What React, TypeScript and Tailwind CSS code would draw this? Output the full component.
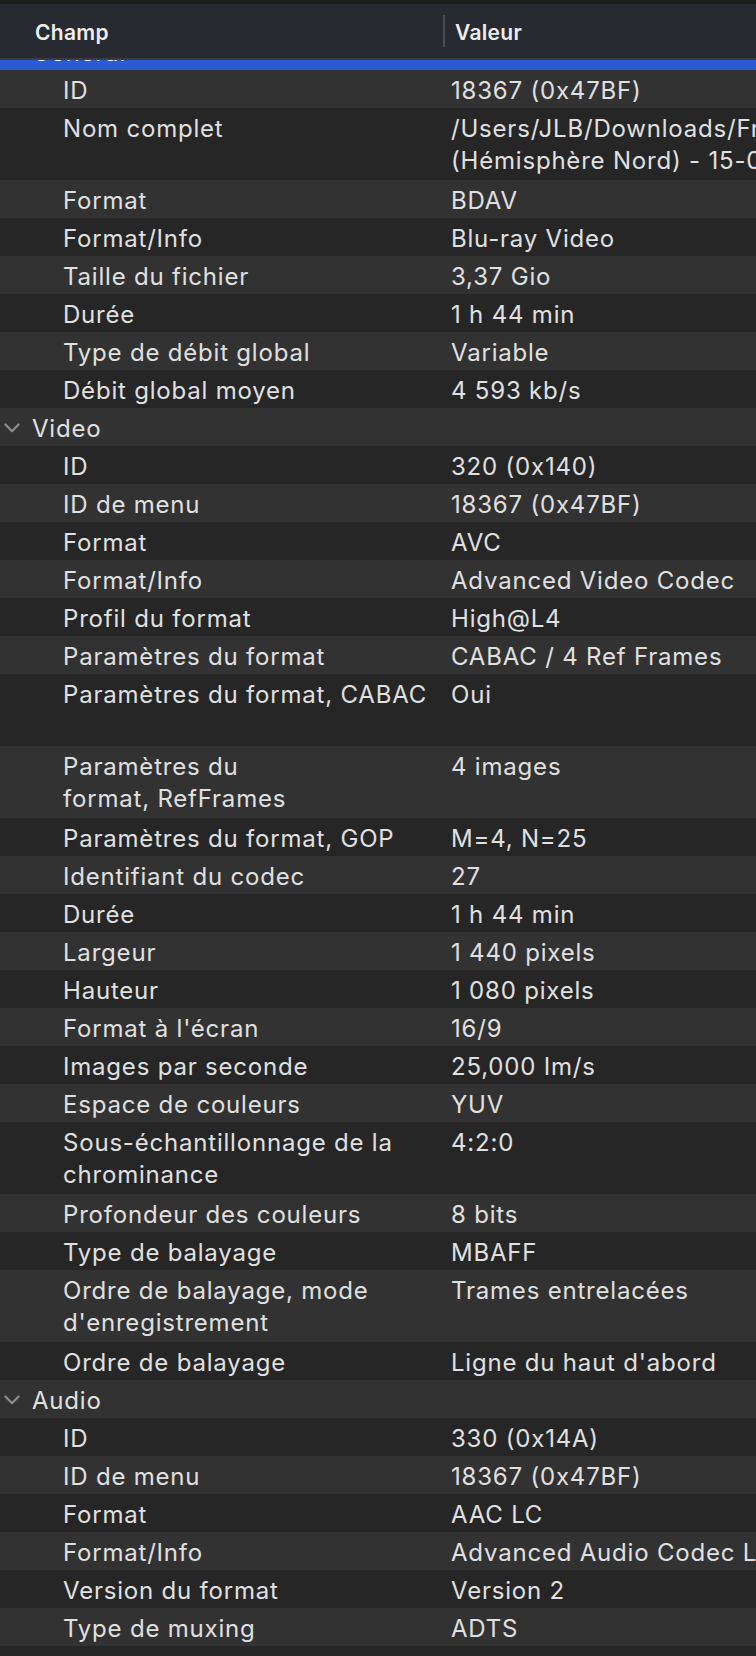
import React from "react";

type Row =
  | { kind: "section"; label: string; selected?: boolean }
  | { kind: "item"; field: string[]; value: string[]; tall?: boolean };

const rows: Row[] = [
  { kind: "section", label: "Général", selected: true },
  { kind: "item", field: ["ID"], value: ["18367 (0x47BF)"] },
  {
    kind: "item",
    field: ["Nom complet"],
    value: ["/Users/JLB/Downloads/France 5 - Les Saisons", "(Hémisphère Nord) - 15-03-2021.m2ts"],
    tall: true,
  },
  { kind: "item", field: ["Format"], value: ["BDAV"] },
  { kind: "item", field: ["Format/Info"], value: ["Blu-ray Video"] },
  { kind: "item", field: ["Taille du fichier"], value: ["3,37 Gio"] },
  { kind: "item", field: ["Durée"], value: ["1 h 44 min"] },
  { kind: "item", field: ["Type de débit global"], value: ["Variable"] },
  { kind: "item", field: ["Débit global moyen"], value: ["4 593 kb/s"] },
  { kind: "section", label: "Video" },
  { kind: "item", field: ["ID"], value: ["320 (0x140)"] },
  { kind: "item", field: ["ID de menu"], value: ["18367 (0x47BF)"] },
  { kind: "item", field: ["Format"], value: ["AVC"] },
  { kind: "item", field: ["Format/Info"], value: ["Advanced Video Codec"] },
  { kind: "item", field: ["Profil du format"], value: ["High@L4"] },
  { kind: "item", field: ["Paramètres du format"], value: ["CABAC / 4 Ref Frames"] },
  { kind: "item", field: ["Paramètres du format, CABAC"], value: ["Oui"], tall: true },
  { kind: "item", field: ["Paramètres du", "format, RefFrames"], value: ["4 images"], tall: true },
  { kind: "item", field: ["Paramètres du format, GOP"], value: ["M=4, N=25"] },
  { kind: "item", field: ["Identifiant du codec"], value: ["27"] },
  { kind: "item", field: ["Durée"], value: ["1 h 44 min"] },
  { kind: "item", field: ["Largeur"], value: ["1 440 pixels"] },
  { kind: "item", field: ["Hauteur"], value: ["1 080 pixels"] },
  { kind: "item", field: ["Format à l'écran"], value: ["16/9"] },
  { kind: "item", field: ["Images par seconde"], value: ["25,000 Im/s"] },
  { kind: "item", field: ["Espace de couleurs"], value: ["YUV"] },
  { kind: "item", field: ["Sous-échantillonnage de la", "chrominance"], value: ["4:2:0"], tall: true },
  { kind: "item", field: ["Profondeur des couleurs"], value: ["8 bits"] },
  { kind: "item", field: ["Type de balayage"], value: ["MBAFF"] },
  {
    kind: "item",
    field: ["Ordre de balayage, mode", "d'enregistrement"],
    value: ["Trames entrelacées"],
    tall: true,
  },
  { kind: "item", field: ["Ordre de balayage"], value: ["Ligne du haut d'abord"] },
  { kind: "section", label: "Audio" },
  { kind: "item", field: ["ID"], value: ["330 (0x14A)"] },
  { kind: "item", field: ["ID de menu"], value: ["18367 (0x47BF)"] },
  { kind: "item", field: ["Format"], value: ["AAC LC"] },
  { kind: "item", field: ["Format/Info"], value: ["Advanced Audio Codec Low Complexity"] },
  { kind: "item", field: ["Version du format"], value: ["Version 2"] },
  { kind: "item", field: ["Type de muxing"], value: ["ADTS"] },
  { kind: "item", field: ["Identifiant du codec"], value: ["40"] },
];

function Chevron() {
  return (
    <svg width="16" height="10" viewBox="0 0 16 10" className="mt-[10px] shrink-0">
      <polyline
        points="1.5,1.5 8,8.2 14.5,1.5"
        fill="none"
        stroke="#8d8d8d"
        strokeWidth="2.2"
        strokeLinecap="round"
        strokeLinejoin="round"
      />
    </svg>
  );
}

export default function App() {
  return (
    <div
      className="w-[756px] h-[1656px] overflow-hidden bg-[#262626] flex flex-col text-[#e0e0e0] text-[24px] tracking-[0.8px]"
      style={{ fontFamily: "Inter, 'Noto Sans', sans-serif" }}
    >
      <div className="h-[4px] shrink-0 bg-[#1e1e1f]" />
      <div className="h-[56px] shrink-0 bg-[#272a31] border-b-2 border-[#3a3c42] flex items-center pt-[3px] text-[21px] font-semibold text-[#ededed] tracking-[0.3px]">
        <div className="w-[443px] pl-[35px]">Champ</div>
        <div className="w-[2px] h-[32px] -mt-[3px] bg-[#4a4d54]" />
        <div className="pl-[10px]">Valeur</div>
      </div>
      <div className="flex-1 overflow-hidden">
        <div className="-mt-[28px] flex flex-col">
          {rows.map((r, i) => {
            const bg =
              r.kind === "section" && r.selected
                ? "bg-[#2a5bd0] text-white"
                : i % 2 === 1
                ? "bg-[#323232]"
                : "bg-[#262626]";
            if (r.kind === "section") {
              return (
                <div key={i} className={`h-[38px] shrink-0 flex items-start pt-[5px] pl-[4px] leading-[32px] ${bg}`}>
                  <Chevron />
                  <span className="ml-[12px]">{r.label}</span>
                </div>
              );
            }
            return (
              <div
                key={i}
                className={`${r.tall ? "h-[72px]" : "h-[38px]"} shrink-0 flex items-start pt-[5px] leading-[32px] overflow-hidden ${bg}`}
              >
                <div className="w-[451px] shrink-0 pl-[63px] flex flex-col">
                  {r.field.map((l, j) => (
                    <span key={j} className="whitespace-nowrap">
                      {l}
                    </span>
                  ))}
                </div>
                <div className="flex-1 min-w-0 overflow-hidden flex flex-col">
                  {r.value.map((l, j) => (
                    <span key={j} className="whitespace-nowrap">
                      {l}
                    </span>
                  ))}
                </div>
              </div>
            );
          })}
        </div>
      </div>
    </div>
  );
}
